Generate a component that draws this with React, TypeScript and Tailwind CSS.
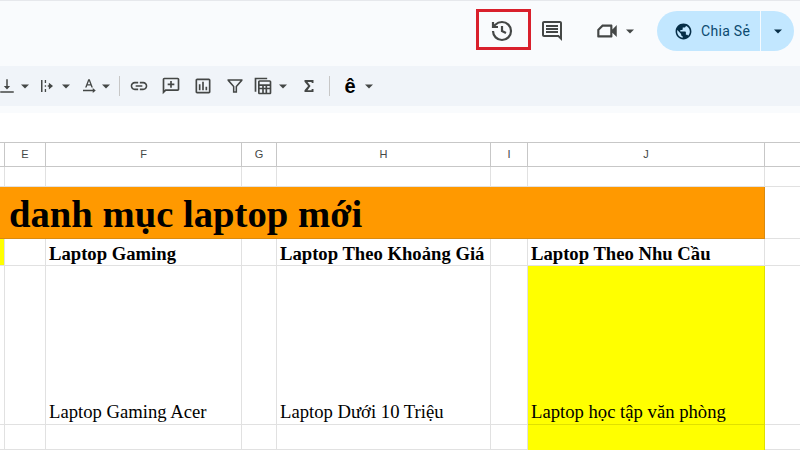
const Caret = ({ className = '' }: { className?: string }) => (
  <svg viewBox="0 0 10 5" className={`w-[10px] h-[5px] shrink-0 ${className}`}>
    <path d="M1 .5h8l-4 4z" fill="currentColor" />
  </svg>
);

const Icon = ({ d, className = '' }: { d: string; className?: string }) => (
  <svg viewBox="0 0 24 24" fill="currentColor" className={`shrink-0 ${className}`}>
    <path d={d} fillRule="evenodd" />
  </svg>
);

const Divider = ({ className = '' }: { className?: string }) => (
  <div className={`w-px h-5 bg-[#c7c7c7] shrink-0 ${className}`} />
);

const paths = {
  comment:
    'M21.99 4c0-1.1-.89-2-1.99-2H4c-1.1 0-2 .9-2 2v12c0 1.1.9 2 2 2h14l4 4-.01-18zM20 4v13.17L18.83 16H4V4h16zM6 12h12v2H6zm0-3h12v2H6zm0-3h12v2H6z',
  video:
    'M17 10.5V7c0-.55-.45-1-1-1H7.5L3 10.5V17c0 .55.45 1 1 1h12c.55 0 1-.45 1-1v-3.5l4 4v-11l-4 4zM15 16H5v-4.7L8.3 8H15v8z',
  globe:
    'M12 2C6.48 2 2 6.48 2 12s4.48 10 10 10 10-4.48 10-10S17.52 2 12 2zm-1 17.93c-3.95-.49-7-3.85-7-7.93 0-.62.08-1.21.21-1.79L9 15v1c0 1.1.9 2 2 2v1.93zm6.9-2.54c-.26-.81-1-1.39-1.9-1.39h-1v-3c0-.55-.45-1-1-1H8v-2h2c.55 0 1-.45 1-1V7h2c1.1 0 2-.9 2-2v-.41c2.93 1.19 5 4.06 5 7.41 0 2.08-.8 3.97-2.1 5.39z',
  valign: 'M3 19h18v2H3zM11 3h2v9h3.2L12 16.5 7.8 12H11z',
  wrap: 'M4 4h2v16H4zM9 11h1.8v2H9zM13 11h1.5V7.5L20 12l-5.5 4.5V13H13z M9 4h1.8v4H9zM9 16h1.8v4H9z',
  rotate:
    'M11 3h2l4.2 11h-2l-.9-2.6H9.7L8.8 14h-2zm-.7 6.7h3.4L12 5.2zM4 17h13v-2.2l4 3.2-4 3.2V19H4z',
  link: 'M3.9 12c0-1.71 1.39-3.1 3.1-3.1h4V7H7c-2.76 0-5 2.24-5 5s2.24 5 5 5h4v-1.9H7c-1.71 0-3.1-1.39-3.1-3.1zM8 13h8v-2H8v2zm9-6h-4v1.9h4c1.71 0 3.1 1.39 3.1 3.1s-1.39 3.1-3.1 3.1h-4V17h4c2.76 0 5-2.24 5-5s-2.24-5-5-5z',
  addComment:
    'M4 2h16c1.1 0 2 .9 2 2v12c0 1.1-.9 2-2 2H6l-4 4V4c0-1.1.9-2 2-2zm0 2v13.2L5.2 16H20V4zm7 2h2v3h3v2h-3v3h-2v-3H8V9h3z',
  chart:
    'M5 3h14c1.1 0 2 .9 2 2v14c0 1.1-.9 2-2 2H5c-1.1 0-2-.9-2-2V5c0-1.1.9-2 2-2zm0 2v14h14V5zm2 5h2v7H7zm4-3h2v10h-2zm4 6h2v4h-2z',
  filter:
    'M3 4h18v1.8L14.5 13v7h-5v-7L3 5.800zm2.700 1.800L11.300 12.300v5.900h1.400v-5.900l5.600-6.500z',
  table:
    'M8 5h12c1.100 0 2 .9 2 2v13c0 1.100-.9 2-2 2H8c-1.100 0-2-.9-2-2V7c0-1.100.9-2 2-2zm0 2v3h12V7zm0 5v2h3v-2zm5 0v2h2v-2zm4 0v2h3v-2zm-9 4v4h3v-4zm5 0v4h2v-4zm4 0v4h3v-4zM2 2h15v2H4v15H2z',
  sigma: 'M6 4h12v4h-2.500V6.500H10L14 12l-4 5.500h5.500V16H18v4H6v-2.200L10.800 12 6 6.200z',
};

// column header + cell borders are drawn on each cell, the grid handles the sizes
const columns = ['', 'E', 'F', 'G', 'H', 'I', 'J', ''];

const cell = 'border-r border-b border-[#e1e1e1] min-w-0';
const bodyText = "font-['Liberation_Serif',serif] text-[18.67px] leading-[22px] text-black whitespace-nowrap";

export default function App() {
  return (
    <div className="w-[800px] h-[450px] overflow-hidden bg-white flex flex-col font-['Roboto',sans-serif]">
      {/* Title bar */}
      <div className="h-[66px] shrink-0 bg-[#f9fbfd] border-t border-[#e6e8ec] flex items-center justify-end pr-[6px] pb-[5px]">
        <button className="relative w-[24px] h-[24px] mr-[26px] text-[#444746]">
          <svg viewBox="0 0 24 24" fill="none" stroke="currentColor" strokeWidth="2.2" className="w-[24px] h-[24px]">
            <path d="M3 12a9 9 0 1 0 9-9 9.750 9.750 0 0 0-6.740 2.740L3 8" />
            <path d="M3 3v5h5" />
            <path d="M12 7v5l4 2" />
          </svg>
          <div className="absolute left-[-14px] top-[-10px] w-[55px] h-[41px] border-[3px] border-[#d9202c]" />
        </button>
        <Icon d={paths.comment} className="w-[24px] h-[24px] text-[#444746] mr-[30px]" />
        <Icon d={paths.video} className="w-[26px] h-[26px] text-[#444746] mr-[5px]" />
        <Caret className="text-[#444746] mr-[22px]" />
        <div className="w-[137px] h-[40px] rounded-full bg-[#c2e7ff] flex items-center text-[#0b4a70]">
          <div className="flex-1 flex items-center pl-[17px] gap-[8px]">
            <Icon d={paths.globe} className="w-[19px] h-[19px] text-[#062e47]" />
            <span className="text-[14px] font-normal tracking-[0.3px] whitespace-nowrap">Chia Sẻ</span>
          </div>
          <div className="w-px h-full bg-[#f4faff]" />
          <div className="w-[33px] flex justify-center">
            <Caret className="text-[#062e47]" />
          </div>
        </div>
      </div>

      {/* Toolbar */}
      <div className="h-[40px] shrink-0 bg-[#f0f4f9] flex items-center text-[#444746] overflow-hidden">
        <Icon d={paths.valign} className="w-[18px] h-[18px] ml-[-2px]" />
        <Caret className="ml-[4px]" />
        <Icon d={paths.wrap} className="w-[18px] h-[18px] ml-[8px]" />
        <Caret className="ml-[5px]" />
        <Icon d={paths.rotate} className="w-[18px] h-[18px] ml-[9px]" />
        <Caret className="ml-[3px]" />
        <Divider className="ml-[8px]" />
        <Icon d={paths.link} className="w-[20px] h-[20px] ml-[9px]" />
        <Icon d={paths.addComment} className="w-[20px] h-[20px] ml-[12px]" />
        <Icon d={paths.chart} className="w-[20px] h-[20px] ml-[12px]" />
        <Icon d={paths.filter} className="w-[20px] h-[20px] ml-[12px]" />
        <Icon d={paths.table} className="w-[20px] h-[20px] ml-[8px]" />
        <Caret className="ml-[5px]" />
        <Icon d={paths.sigma} className="w-[18px] h-[18px] ml-[12px]" />
        <Divider className="ml-[11px]" />
        <div className="w-[16px] ml-[12px] flex justify-center text-[20px] leading-none font-bold text-black font-['Liberation_Sans',sans-serif]">
          ê
        </div>
        <Caret className="ml-[6px]" />
      </div>

      {/* Formula bar area */}
      <div className="h-[7px] shrink-0 bg-[#f9fbfd]" />
      <div className="h-[30px] shrink-0 bg-white border-b border-[#c7c7c7]" />

      {/* Sheet */}
      <div className="w-[810px] flex-1 min-h-0 grid grid-cols-[5px_41px_196px_35px_214px_37px_237px_1fr] grid-rows-[24px_20px_52px_27px_159px_1fr]">
        {columns.map((name, i) => (
          <div
            key={i}
            className="border-r border-b border-[#c7c7c7] flex items-center justify-center text-[11px] text-[#444746] font-['Liberation_Sans',sans-serif]"
          >
            {name}
          </div>
        ))}

        {columns.map((_, i) => (
          <div key={i} className={cell} />
        ))}

        <div className="col-span-7 bg-[#ff9900] border-r border-b border-[#d98a10] flex items-center pl-[9px] pt-[3px] font-['Liberation_Serif',serif] font-bold text-[38.67px] leading-none text-black whitespace-nowrap">
          danh mục laptop mới
        </div>
        <div className={cell} />

        <div className="bg-[#ffff00] border-r border-b border-[#e1e1e1]" />
        <div className={cell} />
        <div className={`${cell} ${bodyText} font-bold pl-[3px] pt-[3px] flex items-center`}>Laptop Gaming</div>
        <div className={cell} />
        <div className={`${cell} ${bodyText} font-bold pl-[3px] pt-[3px] flex items-center`}>Laptop Theo Khoảng Giá</div>
        <div className={cell} />
        <div className={`${cell} ${bodyText} font-bold pl-[3px] pt-[3px] flex items-center`}>Laptop Theo Nhu Cầu</div>
        <div className={cell} />

        <div className={cell} />
        <div className={cell} />
        <div className={`${cell} ${bodyText} pl-[3px] pb-[1px] flex items-end`}>Laptop Gaming Acer</div>
        <div className={cell} />
        <div className={`${cell} ${bodyText} pl-[3px] pb-[1px] flex items-end`}>Laptop Dưới 10 Triệu</div>
        <div className={cell} />
        <div className={`bg-[#ffff00] border-r border-b border-[#e0e000] ${bodyText} pl-[3px] pb-[1px] flex items-end`}>
          Laptop học tập văn phòng
        </div>
        <div className={cell} />

        <div className={cell} />
        <div className={cell} />
        <div className={cell} />
        <div className={cell} />
        <div className={cell} />
        <div className={cell} />
        <div className="bg-[#ffff00] border-r border-[#e0e000]" />
        <div className={cell} />
      </div>
    </div>
  );
}
